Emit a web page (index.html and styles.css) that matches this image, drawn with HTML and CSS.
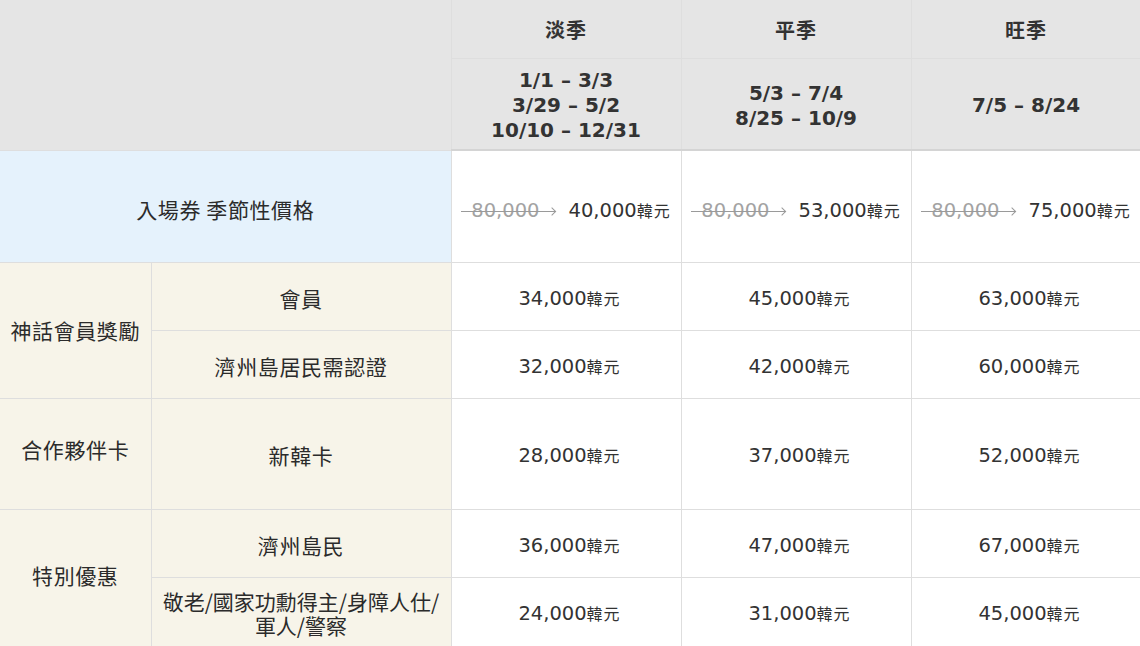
FILE: index.html
```html
<!DOCTYPE html>
<html lang="zh-Hant">
<head>
<meta charset="utf-8">
<link rel="stylesheet" href="styles.css">
</head>
<body>
<table class="price-table">
  <colgroup>
    <col class="c-group">
    <col class="c-sub">
    <col class="c-season">
    <col class="c-season">
    <col class="c-season">
  </colgroup>
  <thead>
    <tr class="h1">
      <th class="blank" colspan="2" rowspan="2"></th>
      <th class="season">淡季</th>
      <th class="season">平季</th>
      <th class="season">旺季</th>
    </tr>
    <tr class="h2">
      <th class="dates">1/1 – 3/3<br>3/29 – 5/2<br>10/10 – 12/31</th>
      <th class="dates">5/3 – 7/4<br>8/25 – 10/9</th>
      <th class="dates">7/5 – 8/24</th>
    </tr>
  </thead>
  <tbody>
    <tr class="r-base">
      <td class="base-label" colspan="2">入場券 季節性價格</td>
      <td class="price price-base"><span class="old">80,000</span><span class="num">40,000</span><span class="unit">韓元</span></td>
      <td class="price price-base"><span class="old">80,000</span><span class="num">53,000</span><span class="unit">韓元</span></td>
      <td class="price price-base"><span class="old">80,000</span><span class="num">75,000</span><span class="unit">韓元</span></td>
    </tr>
    <tr class="r-68">
      <td class="grp" rowspan="2">神話會員獎勵</td>
      <td class="sub">會員</td>
      <td class="price"><span class="num">34,000</span><span class="unit">韓元</span></td>
      <td class="price"><span class="num">45,000</span><span class="unit">韓元</span></td>
      <td class="price"><span class="num">63,000</span><span class="unit">韓元</span></td>
    </tr>
    <tr class="r-68">
      <td class="sub">濟州島居民需認證</td>
      <td class="price"><span class="num">32,000</span><span class="unit">韓元</span></td>
      <td class="price"><span class="num">42,000</span><span class="unit">韓元</span></td>
      <td class="price"><span class="num">60,000</span><span class="unit">韓元</span></td>
    </tr>
    <tr class="r-111">
      <td class="grp grp-high">合作夥伴卡</td>
      <td class="sub">新韓卡</td>
      <td class="price"><span class="num">28,000</span><span class="unit">韓元</span></td>
      <td class="price"><span class="num">37,000</span><span class="unit">韓元</span></td>
      <td class="price"><span class="num">52,000</span><span class="unit">韓元</span></td>
    </tr>
    <tr class="r-68">
      <td class="grp grp-last" rowspan="2">特別優惠</td>
      <td class="sub">濟州島民</td>
      <td class="price"><span class="num">36,000</span><span class="unit">韓元</span></td>
      <td class="price"><span class="num">47,000</span><span class="unit">韓元</span></td>
      <td class="price"><span class="num">67,000</span><span class="unit">韓元</span></td>
    </tr>
    <tr class="r-69">
      <td class="sub sub-two">敬老/國家功勳得主/身障人仕/<br>軍人/警察</td>
      <td class="price"><span class="num">24,000</span><span class="unit">韓元</span></td>
      <td class="price"><span class="num">31,000</span><span class="unit">韓元</span></td>
      <td class="price"><span class="num">45,000</span><span class="unit">韓元</span></td>
    </tr>
  </tbody>
</table>
</body>
</html>
```
FILE: styles.css
```css
html, body {
  margin: 0;
  padding: 0;
  background: #ffffff;
}
body {
  font-family: "DejaVu Sans", "Noto Sans CJK TC", sans-serif;
  color: #333333;
  overflow: hidden;
}
.price-table {
  width: 1141px;
  border-collapse: collapse;
  table-layout: fixed;
}
.c-group { width: 151px; }
.c-sub { width: 300px; }
.c-season { width: 230px; }

.price-table th,
.price-table td {
  border: 1px solid #dedede;
  text-align: center;
  vertical-align: middle;
  padding: 0;
}
.price-table tr > :first-child { border-left: none; }
.price-table thead tr:first-child th { border-top: none; }

.price-table th {
  background: #e5e5e5;
  font-weight: 700;
  color: #333;
}
.h1 { height: 58px; }
.season {
  font-family: "Noto Sans CJK TC", sans-serif;
  font-size: 20px;
  letter-spacing: 1px;
  padding-top: 1px !important;
}
.h2 { height: 92px; }
.h2 th { border-bottom: 2px solid #d4d4d4; }
.dates {
  font-size: 20px;
  line-height: 25px;
  padding-top: 4px !important;
}

.r-base { height: 112px; }
.r-68 { height: 68px; }
.r-69 { height: 69px; }
.r-111 { height: 111px; }

.base-label,
.grp,
.sub {
  font-family: "Noto Sans CJK TC", sans-serif;
  font-size: 21px;
  font-weight: 400;
  letter-spacing: 0.6px;
  color: #2b2b2b;
}
.base-label {
  background: #e5f2fc;
  padding-top: 6px !important;
}
.grp, .sub { background: #f7f4e9; }
.sub { padding-top: 3px !important; }
.grp-high { padding-bottom: 9px !important; }
.grp-last { padding-bottom: 5px !important; }
.sub-two {
  letter-spacing: 0;
  line-height: 24px;
  padding-top: 3px !important;
}

.price { padding: 3px 0 0 7px !important; }
.price-base { padding: 8px 0 0 0 !important; }
.num {
  font-size: 19.5px;
  color: #333;
}
.unit {
  font-family: "Noto Sans CJK TC", sans-serif;
  font-size: 16px;
  letter-spacing: 1px;
  color: #333;
}
.old {
  position: relative;
  display: inline-block;
  color: #a3a3a3;
  font-size: 19.5px;
  padding: 0 18px 0 10px;
  margin-right: 11px;
}
.old::before {
  content: "";
  position: absolute;
  left: 0;
  right: 2px;
  top: 52%;
  border-top: 1px solid #9a9a9a;
}
.old::after {
  content: "";
  position: absolute;
  right: 2px;
  top: 52%;
  width: 5px;
  height: 5px;
  border-top: 1px solid #9a9a9a;
  border-right: 1px solid #9a9a9a;
  transform: translateY(-2.5px) rotate(45deg);
}
```
